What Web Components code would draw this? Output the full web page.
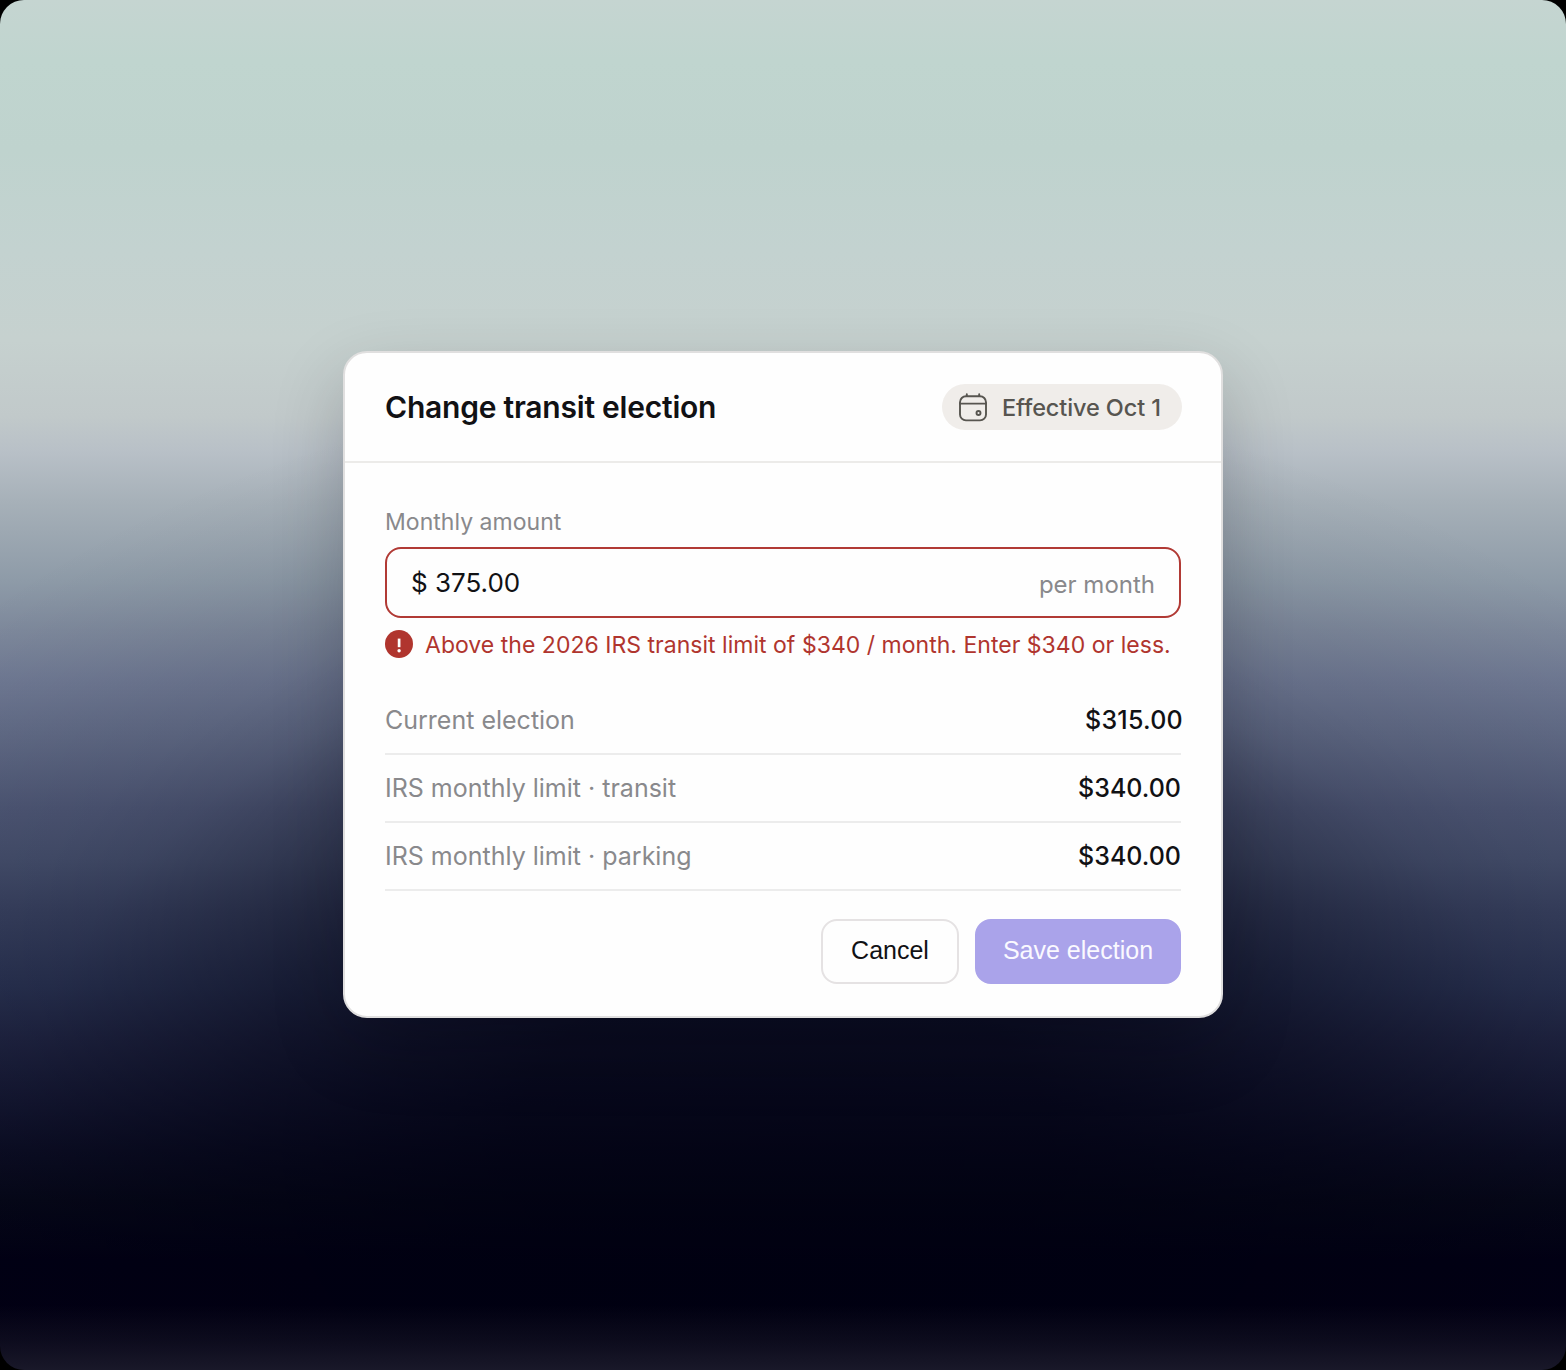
<!DOCTYPE html>
<html lang="en"><head><meta charset="utf-8"><title>Change transit election</title>
<style>
html,body{margin:0;background:#000;font-family:Inter,"Liberation Sans",sans-serif;color:#111114}
</style></head><body>
<scene-backdrop>
<election-dialog>
<span slot="title">Change transit election</span>
<effective-chip slot="chip">Effective Oct 1</effective-chip>
<amount-field label="Monthly amount" value="$ 375.00" unit="per month"></amount-field>
<error-note>Above the 2026 IRS transit limit of $340 / month. Enter $340 or less.</error-note>
<detail-row value="$315.00" style="--shift:-2px;--track:.25px">Current election</detail-row>
<detail-row value="$340.00">IRS monthly limit · transit</detail-row>
<detail-row value="$340.00">IRS monthly limit · parking</detail-row>
<action-button slot="actions" style="--w:138px">Cancel</action-button>
<action-button slot="actions" primary style="--w:206px">Save election</action-button>
</election-dialog>
</scene-backdrop>
<script>
const define=(name,html)=>customElements.define(name,class extends HTMLElement{
  connectedCallback(){
    if(this.shadowRoot)return;
    this.attachShadow({mode:'open'}).innerHTML=html;
    this.shadowRoot.querySelectorAll('[data-attr]').forEach(n=>n.textContent=this.getAttribute(n.dataset.attr));
  }
});
define('scene-backdrop',`<style>
:host{display:flex;justify-content:center;box-sizing:border-box;width:1566px;height:1370px;padding-top:351px;border-radius:24px;overflow:hidden;
background:
linear-gradient(180deg,transparent 1305px,rgba(25,24,41,.5) 1342px,#191829 1370px),
radial-gradient(900px 620px at 783px 1150px,rgba(0,0,16,.72) 0,rgba(0,0,16,.7) 30%,rgba(0,0,16,.6) 45%,rgba(0,0,16,.46) 60%,rgba(0,0,16,.27) 75%,rgba(0,0,18,.15) 85%,rgba(0,0,18,.09) 94%,rgba(0,0,18,.04) 110%,transparent 125%),
linear-gradient(180deg,#c5d5d1 0,#c0d5cf 60px,#bfd3ce 150px,#c3d2d0 250px,#c6d1cf 340px,#c1c9ca 416px,#b8c0c7 452px,#a6b0b8 503px,#8e9ba8 580px,#7e899c 630px,#6f7993 681px,#626c87 732px,#4e5775 809px,#454f6c 860px,#38415f 911px,#293251 988px,#202542 1039px,#141731 1105px,#0c0e24 1150px,#060818 1200px,#010014 1260px,#020013 1370px)}
</style><slot></slot>`);
define('election-dialog',`<style>
:host{display:block;box-sizing:border-box;width:880px;height:667px;background:#fefefe;border:2px solid #e0dfdf;border-radius:24px;box-shadow:0 28px 72px rgba(0,0,16,.2)}
header{display:flex;justify-content:space-between;align-items:center;box-sizing:border-box;height:110px;padding:0 39px 0 40px;border-bottom:2px solid #ecebe9}
h1{font-size:30px;font-weight:600;line-height:36px;letter-spacing:-.22px;margin:0}
main{padding:45px 40px 0}
footer{display:flex;justify-content:flex-end;gap:16px;padding:28px 40px 0}
</style><header><h1><slot name="title"></slot></h1><slot name="chip"></slot></header><main><slot></slot></main><footer><slot name="actions"></slot></footer>`);
define('effective-chip',`<style>
:host{display:flex;align-items:center;box-sizing:border-box;width:240px;height:46px;padding-left:16px;gap:14px;border-radius:23px;background:#f0edea;color:#575550;font-size:23.5px;font-weight:480;letter-spacing:-.1px;white-space:nowrap}
svg{width:30px;height:30px;flex:none}
</style><svg viewBox="0 0 30 30" fill="none" stroke="currentColor" stroke-width="1.9" stroke-linecap="round"><rect x="2" y="4.2" width="26" height="24.2" rx="6"/><path d="M2 11.6h26M8.8 3.9V2.2M21.2 3.9V2.2"/><circle cx="20.5" cy="21" r="2"/></svg><span><slot></slot></span>`);
define('amount-field',`<style>
:host{display:block}
label{display:block;font-size:23px;font-weight:380;line-height:28px;color:#89898c;letter-spacing:.03px}
.box{display:flex;align-items:center;justify-content:space-between;box-sizing:border-box;height:71px;margin-top:11px;padding:0 24px;border:2px solid #b13a35;border-radius:16px}
.value{font-size:26px;padding-bottom:1px}
.unit{font-size:24px;font-weight:380;color:#89898c;letter-spacing:0;padding-top:3px}
</style><label data-attr="label"></label><div class="box"><span class="value" data-attr="value"></span><span class="unit" data-attr="unit"></span></div>`);
define('error-note',`<style>
:host{display:flex;align-items:center;gap:12px;margin-top:12px;height:28px;margin-bottom:29px;color:#b0352e;font-size:23px;font-weight:380;letter-spacing:.02px;white-space:nowrap}
svg{width:28px;height:28px;flex:none}
span{padding-top:1px}
</style><svg viewBox="0 0 28 28"><circle cx="14" cy="14" r="14" fill="#b0352e"/><path d="M14.1 8.6v8.6" stroke="#fff" stroke-width="2.7"/><circle cx="14.1" cy="20.7" r="1.7" fill="#fff"/></svg><span><slot></slot></span>`);
define('detail-row',`<style>
:host{display:flex;align-items:center;justify-content:space-between;box-sizing:border-box;height:68px;border-bottom:2px solid #ececec;font-size:25px}
.name{color:#89898c;font-weight:380;letter-spacing:0}
.value{font-weight:500;letter-spacing:var(--track,0);margin-right:var(--shift,0)}
</style><span class="name"><slot></slot></span><span class="value" data-attr="value"></span>`);
define('action-button',`<style>
:host{display:block}
button{display:block;box-sizing:border-box;width:var(--w);height:65px;padding:0 0 2px;border:2px solid #e5e2e3;border-radius:16px;background:#fefefe;color:#111114;font:25px "Liberation Sans",Arial,sans-serif}
:host([primary]) button{background:#aaa3ea;border-color:#aaa3ea;color:#faf9ff}
</style><button><slot></slot></button>`);
</script></body></html>
